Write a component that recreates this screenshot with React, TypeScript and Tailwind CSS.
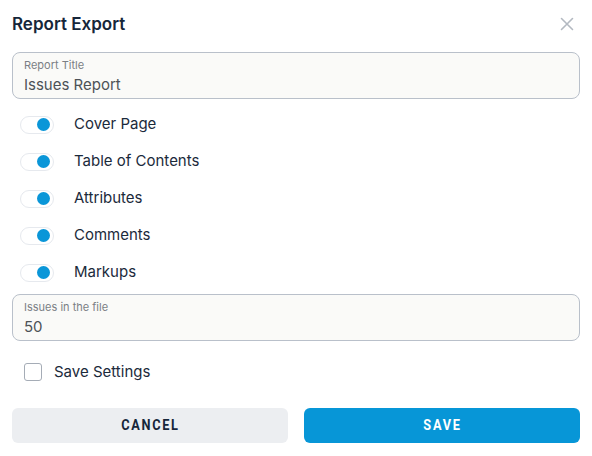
import React from "react";

const items = ["Cover Page", "Table of Contents", "Attributes", "Comments", "Markups"];

function Toggle() {
  return (
    <div className="w-[34px] h-[18px] rounded-full border border-[#e6e9ee] bg-white flex items-center justify-end pr-[3px]">
      <div className="w-[13px] h-[13px] rounded-full bg-[#0a96d8]" />
    </div>
  );
}

function Field({ label, value }: { label: string; value: string }) {
  return (
    <div className="h-[47px] rounded-[8px] border border-[#b9c0ca] bg-[#fafaf8] px-[11px] pt-[5px] flex flex-col">
      <span className="text-[11px] leading-[14px] text-[#7b7f85]">{label}</span>
      <span className="text-[15px] leading-[22px] mt-[2px] text-[#4d5257]">{value}</span>
    </div>
  );
}

const btnFont = { fontFamily: "Roboto, 'DejaVu Sans Condensed', sans-serif" };

export default function App() {
  return (
    <div
      className="w-[592px] h-[456px] bg-white px-[12px] flex flex-col"
      style={{ fontFamily: "Inter, 'Noto Sans', sans-serif" }}
    >
      <div className="h-[46px] pt-[12px] flex items-start justify-between">
        <h1 className="text-[17px] leading-[24px] font-semibold text-[#16263a]">Report Export</h1>
        <svg width="14" height="14" viewBox="0 0 14 14" className="mt-[5px] mr-[6px]">
          <path d="M1.5 1.5 L12.5 12.5 M12.5 1.5 L1.5 12.5" stroke="#b3b9c1" strokeWidth="1.6" strokeLinecap="round" />
        </svg>
      </div>
      <div className="mt-[6px]">
        <Field label="Report Title" value="Issues Report" />
      </div>
      <div className="mt-[7px] flex flex-col">
        {items.map((t) => (
          <div key={t} className="h-[37px] flex items-center pl-[8px] gap-[20px]">
            <Toggle />
            <span className="text-[15px] text-[#1b2a3b]">{t}</span>
          </div>
        ))}
      </div>
      <div className="mt-[3px]">
        <Field label="Issues in the file" value="50" />
      </div>
      <div className="mt-[16px] h-[30px] flex items-center pl-[12px] gap-[12px]">
        <div className="w-[18px] h-[18px] rounded-[3px] border border-[#a5acb6] bg-white" />
        <span className="text-[15px] text-[#1b2a3b]">Save Settings</span>
      </div>
      <div className="mt-[21px] grid grid-cols-2 gap-[16px]">
        <button
          className="h-[35px] rounded-[6px] bg-[#eceef1] text-[#16263a] flex items-center justify-center"
          style={btnFont}
        >
          <span className="inline-block text-[15px] font-bold tracking-[2px] scale-x-[0.85]">CANCEL</span>
        </button>
        <button
          className="h-[35px] rounded-[6px] bg-[#0796d7] text-white flex items-center justify-center"
          style={btnFont}
        >
          <span className="inline-block text-[15px] font-bold tracking-[2px] scale-x-[0.85]">SAVE</span>
        </button>
      </div>
    </div>
  );
}
